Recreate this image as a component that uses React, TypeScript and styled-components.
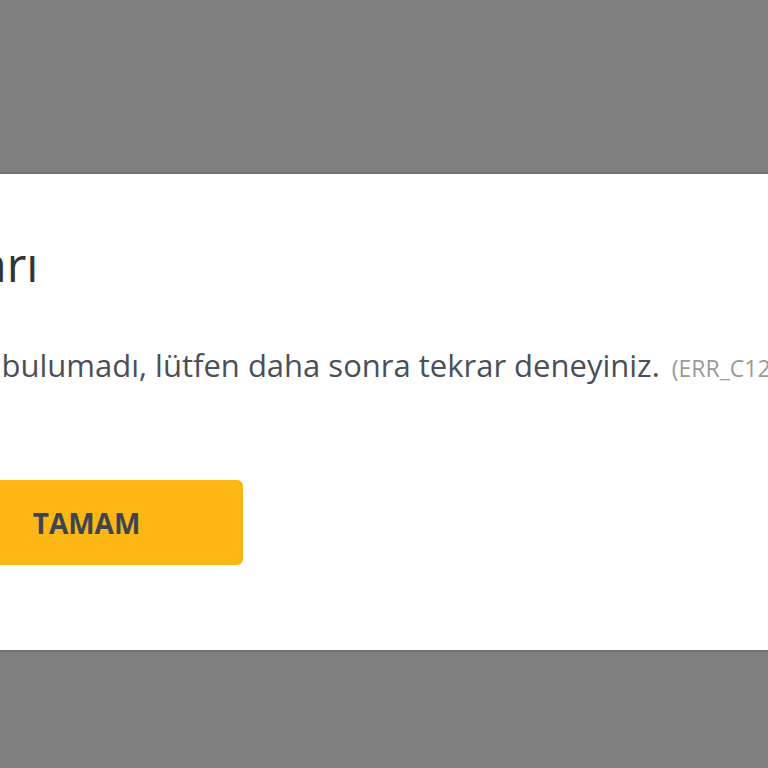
import React from "react";
import styled, { createGlobalStyle } from "styled-components";

const GlobalStyle = createGlobalStyle`
  html, body {
    margin: 0;
    padding: 0;
    background: #808080;
  }
  * {
    box-sizing: border-box;
  }
`;

const Overlay = styled.div`
  width: 100vw;
  height: 100vh;
  overflow: hidden;
  background: #808080;
  padding-top: 174px;
`;

const Dialog = styled.div`
  width: 1200px;
  margin-left: -135px;
  background: #ffffff;
  padding: 61px 56px 85px;
  box-shadow: 0 0 4px rgba(0, 0, 0, 0.35);
  font-family: "Open Sans", "Liberation Sans", sans-serif;
`;

const Title = styled.h2`
  margin: 0;
  font-size: 48px;
  line-height: 58px;
  font-weight: 400;
  color: #333333;
`;

const Message = styled.p`
  margin: 52px 0 0;
  font-size: 31px;
  line-height: 40px;
  color: #4b4f58;
  white-space: nowrap;
`;

const ErrorCode = styled.span`
  font-size: 23px;
  color: #9a9a9a;
  margin-left: 12px;
`;

const Actions = styled.div`
  display: flex;
  margin-top: 92px;
`;

const OkButton = styled.button`
  width: 322px;
  height: 85px;
  padding: 0 0 0 9px;
  border: none;
  border-radius: 6px;
  background: #fdb714;
  color: #3f4550;
  font-family: "Open Sans", "Liberation Sans", sans-serif;
  font-weight: 700;
  font-size: 28px;
  cursor: pointer;
`;

export default function App() {
  return (
    <>
      <GlobalStyle />
      <Overlay>
        <Dialog>
          <Title>Uyarı</Title>
          <Message>
            Yanıt bulumadı, lütfen daha sonra tekrar deneyiniz.
            <ErrorCode>(ERR_C1204)</ErrorCode>
          </Message>
          <Actions>
            <OkButton>TAMAM</OkButton>
          </Actions>
        </Dialog>
      </Overlay>
    </>
  );
}
